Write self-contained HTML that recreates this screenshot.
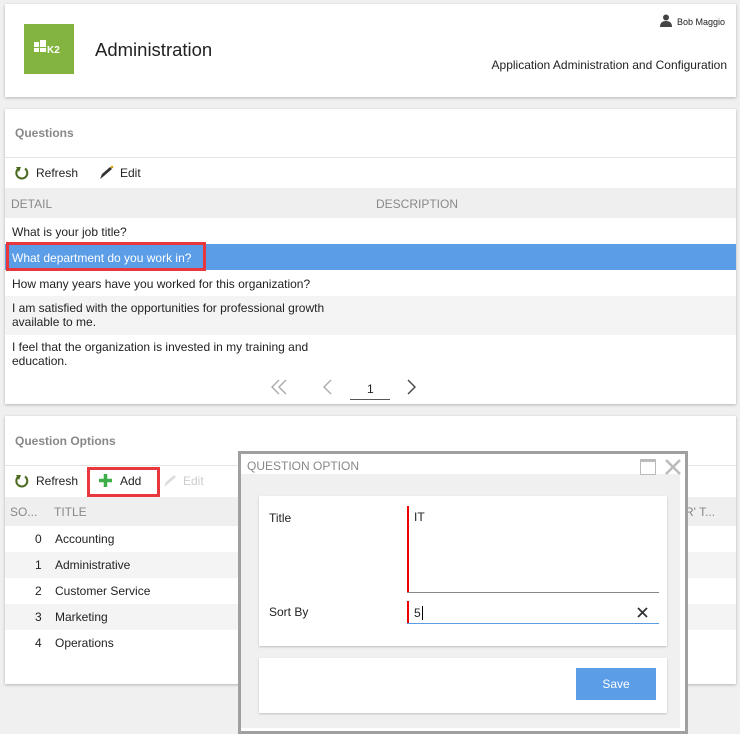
<!DOCTYPE html>
<html><head><style>
*{margin:0;padding:0;box-sizing:border-box}
body{width:740px;height:734px;background:#f0f0f0;font-family:"Liberation Sans",Arial,sans-serif;font-size:12px;color:#222;position:relative;overflow:hidden}
.p{position:absolute;background:#fff;box-shadow:0 1px 3px rgba(0,0,0,.25)}
.a{position:absolute}
.row{position:absolute;left:0;right:0;height:26px}
.t{position:absolute;white-space:nowrap}
</style></head><body>
<div class="p" style="left:5px;top:4px;width:731px;height:93px">
 <div class="a" style="left:19px;top:20px;width:50px;height:50px;background:#84b440"></div>
 <div class="a" style="left:29px;top:38px;width:5px;height:5px;background:#fff"></div>
 <div class="a" style="left:35px;top:36px;width:6px;height:7px;background:#fff"></div>
 <div class="a" style="left:29px;top:44px;width:5px;height:4px;background:#fff"></div>
 <div class="a" style="left:35px;top:44px;width:6px;height:4px;background:#fff"></div>
 <div class="t" style="left:42px;top:41px;color:#fff;font-size:10px;font-weight:bold">K2</div>
 <div class="t" style="left:90px;top:35px;font-size:18.5px;color:#222">Administration</div>
 <svg class="a" style="left:655px;top:10px" width="12" height="13" viewBox="0 0 12 13"><circle cx="6" cy="3.5" r="3" fill="#444"/><path d="M0 13 Q0 7 6 7 Q12 7 12 13Z" fill="#444"/></svg>
 <div class="t" style="left:672px;top:13px;font-size:9px">Bob Maggio</div>
 <div class="t" style="right:9px;top:54px;font-size:12px">Application Administration and Configuration</div>
</div>

<div class="p" style="left:5px;top:109px;width:731px;height:295px">
 <div class="t" style="left:10px;top:17px;font-weight:bold;color:#888">Questions</div>
 <div class="a" style="left:0;right:0;top:48px;height:1px;background:#e4e4e4"></div>
 <svg class="a" style="left:10px;top:56px" width="14" height="15" viewBox="0 0 14 15"><path d="M10 3.5 A5.5 5.5 0 1 1 3 4" fill="none" stroke="#4a6b1f" stroke-width="2"/><path d="M1 2 L6 2 L4 7Z" fill="#4a6b1f"/></svg>
 <div class="t" style="left:31px;top:57px">Refresh</div>
 <svg class="a" style="left:93px;top:56px" width="16" height="15" viewBox="0 0 16 15"><path d="M2 14 L4 9 L12 2 L14 4 L6 11Z" fill="#333"/><circle cx="14" cy="2" r="1.3" fill="#d9a000"/></svg>
 <div class="t" style="left:115px;top:57px">Edit</div>
 <div class="a" style="left:0;right:0;top:79px;height:30px;background:#efefef"></div>
 <div class="t" style="left:6px;top:88px;color:#888">DETAIL</div>
 <div class="t" style="left:371px;top:88px;color:#888">DESCRIPTION</div>
 <div class="row" style="top:109px"><div class="t" style="left:7px;top:7px">What is your job title?</div></div>
 <div class="row" style="top:135px;background:#5b9de6"><div class="a" style="left:1px;top:-2px;width:200px;height:29px;border:3px solid #e8373d"></div><div class="t" style="left:7px;top:7px;color:#fff">What department do you work in?</div></div>
 <div class="row" style="top:161px"><div class="t" style="left:7px;top:7px">How many years have you worked for this organization?</div></div>
 <div class="row" style="top:187px;height:39px;background:#f4f4f4"><div class="t" style="left:7px;top:5px;line-height:14px">I am satisfied with the opportunities for professional growth<br>available to me.</div></div>
 <div class="row" style="top:226px;height:39px"><div class="t" style="left:7px;top:5px;line-height:14px">I feel that the organization is invested in my training and<br>education.</div></div>
 <svg class="a" style="left:266px;top:270px" width="20" height="16" viewBox="0 0 20 16"><path d="M8 1L1 8L8 15M15 1L8 8L15 15" fill="none" stroke="#aaa" stroke-width="1.4"/></svg>
 <svg class="a" style="left:318px;top:270px" width="10" height="16" viewBox="0 0 10 16"><path d="M8 1L1 8L8 15" fill="none" stroke="#aaa" stroke-width="1.4"/></svg>
 <div class="t" style="left:362px;top:273px">1</div>
 <div class="a" style="left:345px;top:290px;width:40px;height:1px;background:#555"></div>
 <svg class="a" style="left:402px;top:270px" width="10" height="16" viewBox="0 0 10 16"><path d="M1 1L8 8L1 15" fill="none" stroke="#444" stroke-width="1.4"/></svg>
</div>

<div class="p" style="left:5px;top:416px;width:731px;height:268px">
 <div class="t" style="left:10px;top:18px;font-weight:bold;color:#888">Question Options</div>
 <div class="a" style="left:0;right:0;top:49px;height:1px;background:#e4e4e4"></div>
 <svg class="a" style="left:10px;top:57px" width="14" height="15" viewBox="0 0 14 15"><path d="M10 3.5 A5.5 5.5 0 1 1 3 4" fill="none" stroke="#4a6b1f" stroke-width="2"/><path d="M1 2 L6 2 L4 7Z" fill="#4a6b1f"/></svg>
 <div class="t" style="left:31px;top:58px">Refresh</div>
 <div class="a" style="left:82px;top:51px;width:73px;height:30px;border:3px solid #e8373d"></div>
 <svg class="a" style="left:93px;top:57px" width="15" height="15" viewBox="0 0 15 15"><path d="M7.5 1V14M1 7.5H14" stroke="#3fae49" stroke-width="3.5"/></svg>
 <div class="t" style="left:115px;top:58px">Add</div>
 <svg class="a" style="left:157px;top:57px" width="16" height="15" viewBox="0 0 16 15"><path d="M2 14 L4 9 L12 2 L14 4 L6 11Z" fill="#ddd"/></svg>
 <div class="t" style="left:178px;top:58px;color:#ccc">Edit</div>
 <div class="a" style="left:0;right:0;top:81px;height:29px;background:#efefef"></div>
 <div class="t" style="left:5px;top:89px;color:#888">SO...</div>
 <div class="t" style="left:49px;top:89px;color:#888">TITLE</div>
 <div class="t" style="left:672px;top:89px;color:#888">ER' T...</div>
 <div class="row" style="top:110px"><div class="t" style="left:30px;top:6px">0</div><div class="t" style="left:50px;top:6px">Accounting</div></div>
 <div class="row" style="top:136px;background:#f4f4f4"><div class="t" style="left:30px;top:6px">1</div><div class="t" style="left:50px;top:6px">Administrative</div></div>
 <div class="row" style="top:162px"><div class="t" style="left:30px;top:6px">2</div><div class="t" style="left:50px;top:6px">Customer Service</div></div>
 <div class="row" style="top:188px;background:#f4f4f4"><div class="t" style="left:30px;top:6px">3</div><div class="t" style="left:50px;top:6px">Marketing</div></div>
 <div class="row" style="top:214px"><div class="t" style="left:30px;top:6px">4</div><div class="t" style="left:50px;top:6px">Operations</div></div>
</div>

<div class="a" style="left:238px;top:451px;width:450px;height:283px;background:#fff;border:3px solid #a0a0a0">
 <div class="a" style="left:0;top:20px;width:439px;height:254px;background:#f0f0f0"></div>
 <div class="t" style="left:6px;top:5px;color:#888">QUESTION OPTION</div>
 <div class="a" style="left:399px;top:5px;width:16px;height:16px;border:1px solid #bbb;border-top:3px solid #bbb;background:#fff"></div>
 <svg class="a" style="left:424px;top:5px" width="16" height="16" viewBox="0 0 16 16"><path d="M1 1L15 15M15 1L1 15" stroke="#bbb" stroke-width="2.5"/></svg>
 <div class="a" style="left:18px;top:42px;width:408px;height:150px;background:#fff;box-shadow:0 1px 2px rgba(0,0,0,.2)">
  <div class="t" style="left:10px;top:15px">Title</div>
  <div class="a" style="left:148px;top:10px;width:2px;height:87px;background:#e00"></div>
  <div class="a" style="left:148px;top:96px;width:252px;height:1px;background:#888"></div>
  <div class="t" style="left:155px;top:14px">IT</div>
  <div class="t" style="left:10px;top:109px">Sort By</div>
  <div class="a" style="left:148px;top:105px;width:2px;height:22px;background:#e00"></div>
  <div class="a" style="left:148px;top:127px;width:252px;height:1px;background:#5b9de6"></div>
  <div class="t" style="left:155px;top:110px">5<span style="border-left:1px solid #000;margin-left:1px"></span></div>
  <svg class="a" style="left:378px;top:111px" width="11" height="11" viewBox="0 0 11 11"><path d="M1 1L10 10M10 1L1 10" stroke="#333" stroke-width="1.8"/></svg>
 </div>
 <div class="a" style="left:18px;top:204px;width:408px;height:55px;background:#fff;box-shadow:0 1px 2px rgba(0,0,0,.2)">
  <div class="a" style="left:317px;top:10px;width:80px;height:32px;background:#5b9de6;color:#fff;text-align:center;line-height:32px">Save</div>
 </div>
</div>
</body></html>
